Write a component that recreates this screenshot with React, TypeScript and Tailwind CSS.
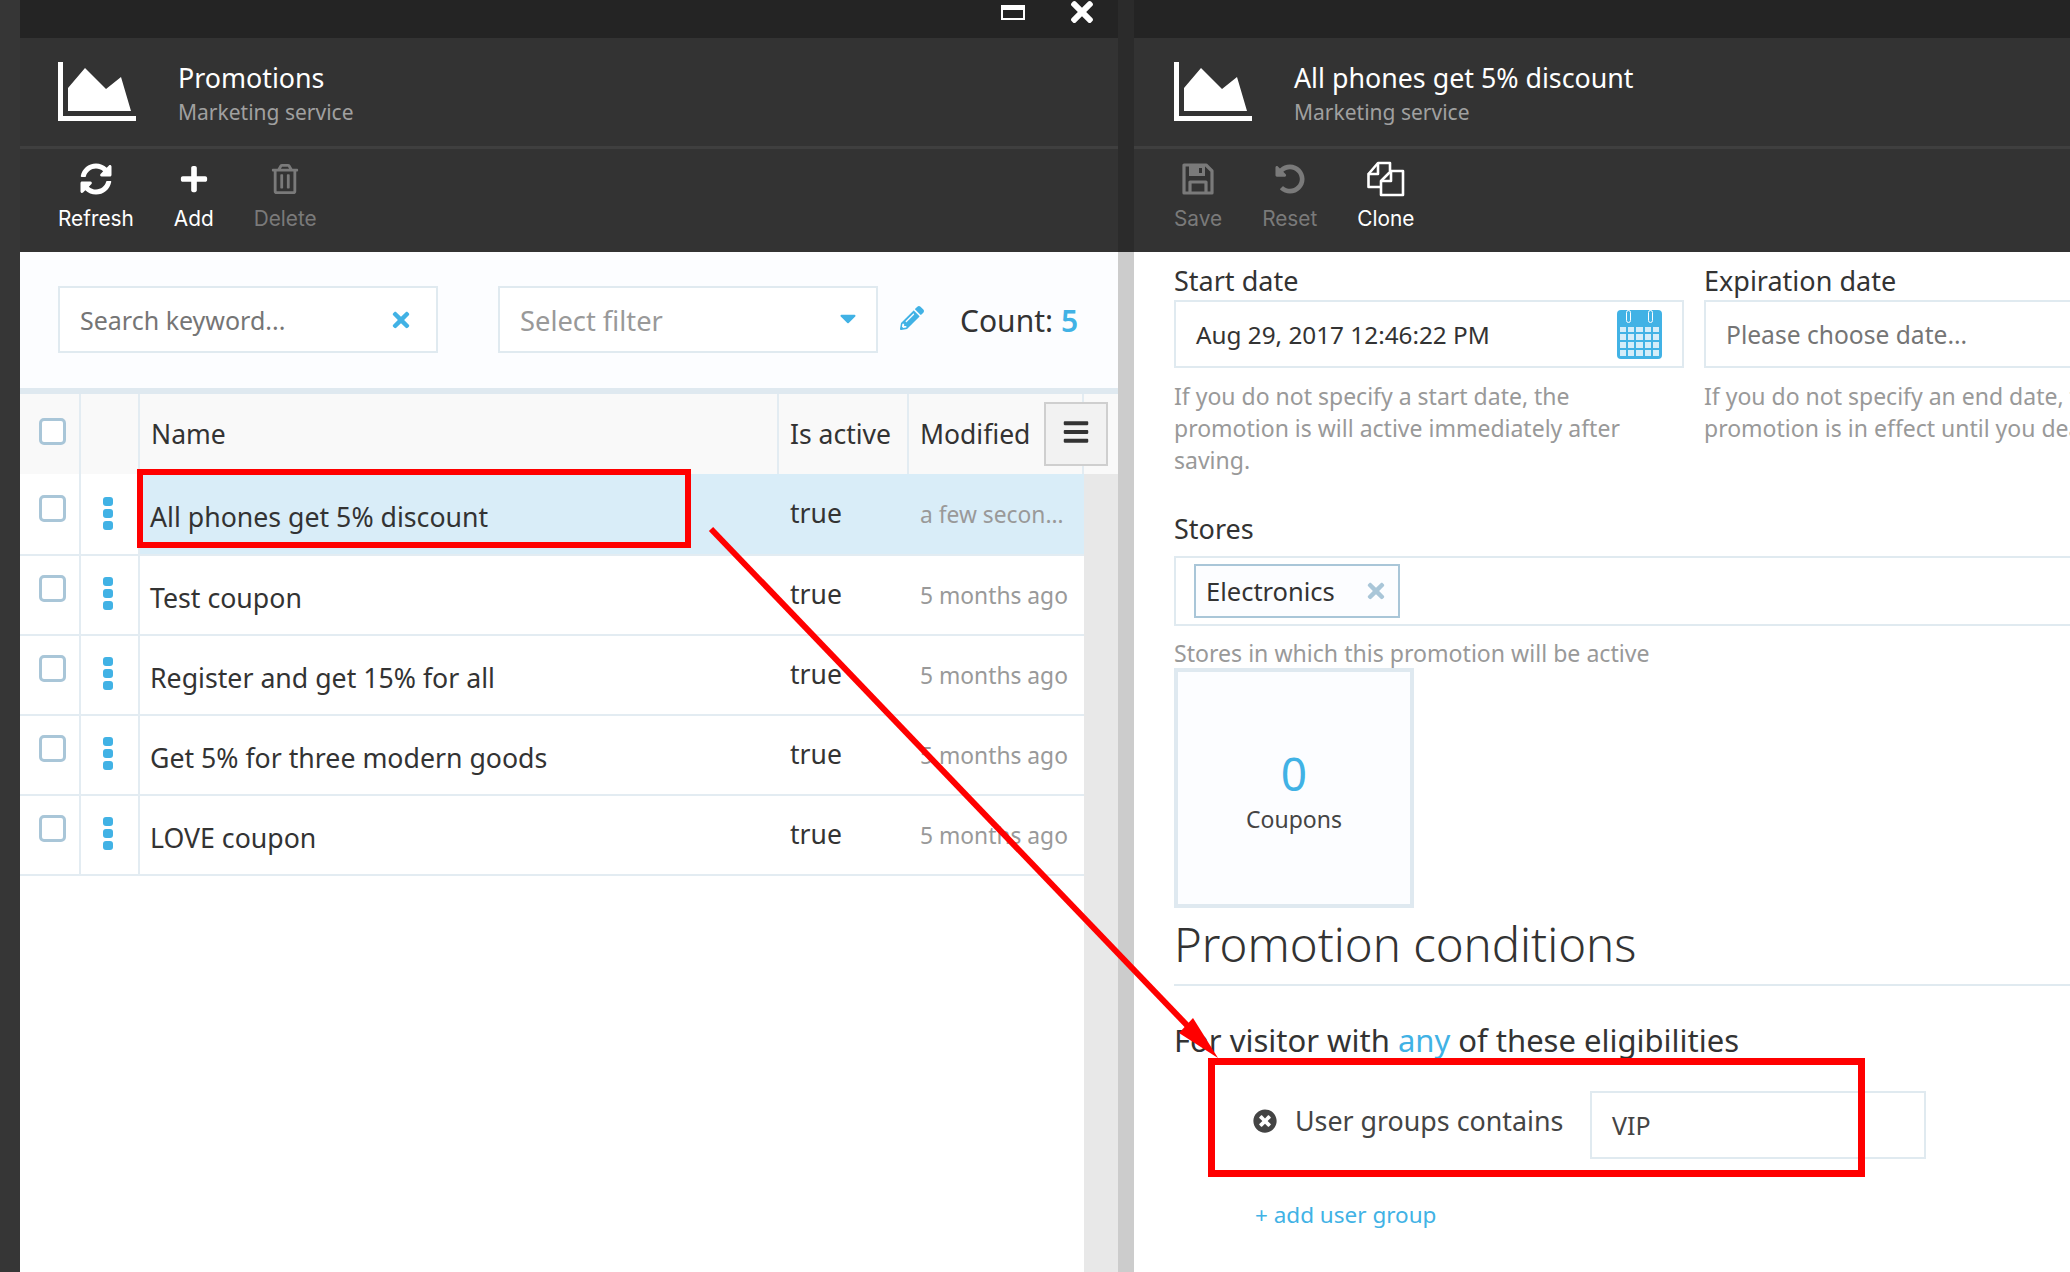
import { ReactNode } from "react";
import { FaBars, FaCaretDown, FaPencilAlt, FaPlus, FaRegTrashAlt, FaSyncAlt, FaTimes, FaTimesCircle, FaUndoAlt } from "react-icons/fa";

const rows = [
  { name: "All phones get 5% discount", modified: "a few seconds ago", selected: true },
  { name: "Test coupon", modified: "5 months ago" },
  { name: "Register and get 15% for all", modified: "5 months ago" },
  { name: "Get 5% for three modern goods", modified: "5 months ago" },
  { name: "LOVE coupon", modified: "5 months ago" },
];

function ChartLogo() {
  return (
    <svg width="78" height="59" viewBox="0 0 78 59" className="shrink-0 fill-white">
      <path d="M0 0h5v54h73v5H0z" />
      <polygon points="10,49 10,26 27,6 48,27 63,15 73,49" />
    </svg>
  );
}

function CloneIcon() {
  return (
    <svg width="38" height="36" viewBox="0 0 38 36" fill="none" stroke="white" strokeWidth="2.6" strokeLinejoin="round">
      <path d="M1.5 13 L11 2 H23 V10" />
      <path d="M11 2 V13 H1.5 V26 H14" />
      <path d="M14 20 L24 10 H36 V34 H14 Z" />
      <path d="M24 10 V20 H14" />
    </svg>
  );
}

function SaveIcon() {
  return (
    <svg width="32" height="32" viewBox="0 0 32 32" fill="none" stroke="currentColor" strokeWidth="3.2" strokeLinejoin="round">
      <path d="M2 2 H24 L30 8 V30 H2 Z" />
      <path d="M7 2 H23 V13 H7 Z M17 5 V10 H20 V5 Z" fill="currentColor" fillRule="evenodd" stroke="none" />
      <path d="M8 30 V19 H24 V30" />
    </svg>
  );
}

function CalendarIcon() {
  const cells = Array.from({ length: 20 });
  return (
    <div className="relative flex h-[49px] w-[45px] shrink-0 flex-col rounded-[4px] bg-[#41b2e5] px-[3px] pb-[3px] pt-[17px]">
      <span className="absolute left-[9px] top-0 h-[13px] w-[5px] rounded-full border border-[#fcfdff] bg-[#41b2e5]" />
      <span className="absolute right-[9px] top-0 h-[13px] w-[5px] rounded-full border border-[#fcfdff] bg-[#41b2e5]" />
      <div className="grid flex-1 grid-cols-5 grid-rows-4 gap-[2px]">
        {cells.map((_, i) => (
          <span key={i} className="bg-[#d4edf9]" />
        ))}
      </div>
    </div>
  );
}

function BladeHead({ title }: { title: string }) {
  return (
    <div className="flex h-[108px] items-start bg-[#333333] pt-[24px]">
      <ChartLogo />
      <div className="ml-[42px] -mt-[1px]">
        <div className="h-[34px] whitespace-nowrap text-[26.8px] leading-[34px] text-white">{title}</div>
        <div className="h-[34px] text-[21px] leading-[34px] text-[#a0a0a0]">Marketing service</div>
      </div>
    </div>
  );
}

function ToolButton({ icon, label, off }: { icon: ReactNode; label: string; off?: boolean }) {
  return (
    <div className={`flex flex-col items-center ${off ? "text-[#7a7a7a]" : "text-white"}`}>
      <div className="flex h-[34px] items-center">{icon}</div>
      <div className="mt-[10px] font-['Inter'] text-[20.8px] leading-[26px]">{label}</div>
    </div>
  );
}

function Toolbar({ children }: { children: ReactNode }) {
  return (
    <div className="flex h-[103px] items-start gap-[40px] bg-[#333333] pt-[13px]">{children}</div>
  );
}

function Divider() {
  return <div className="h-[3px] bg-[#3f3f3f]" />;
}

function Checkbox() {
  return <span className="block h-[27px] w-[27px] rounded-[5px] border-[3px] border-[#a9c6d8] bg-white" />;
}

function Dots() {
  return (
    <div className="flex flex-col gap-[3px]">
      <span className="h-[9px] w-[10px] rounded-[3px] bg-[#41b2e5]" />
      <span className="h-[9px] w-[10px] rounded-[3px] bg-[#41b2e5]" />
      <span className="h-[9px] w-[10px] rounded-[3px] bg-[#41b2e5]" />
    </div>
  );
}

function TableHeader() {
  return (
    <div className="relative grid h-[80px] grid-cols-[61px_59px_639px_130px_175px_32px] bg-[#f9f9f9] text-[26.5px] text-[#333333]">
      <div className="flex items-center justify-center border-r-2 border-[#e3ecf2] pb-[6px] pl-[6px]">
        <Checkbox />
      </div>
      <div className="border-r-2 border-[#e3ecf2]" />
      <div className="flex items-center border-r-2 border-[#e3ecf2] pl-[11px] pt-[2px]">Name</div>
      <div className="flex items-center whitespace-nowrap border-r-2 border-[#e3ecf2] pl-[11px] pt-[2px]">Is active</div>
      <div className="flex items-center border-r-2 border-[#e3ecf2] pl-[11px] pt-[2px]">Modified</div>
      <div />
      {/* column menu sits over the header */}
      <div className="absolute left-[1024px] top-[8px] flex h-[64px] w-[64px] items-center justify-center border-2 border-[#cfcfcf] bg-[#f2f2f2] pb-[4px]">
        <FaBars size={28} />
      </div>
    </div>
  );
}

function TableRow({ name, modified, selected }: { name: string; modified: string; selected?: boolean }) {
  return (
    <div className={`grid grid-cols-[61px_59px_639px_130px_175px] border-b-2 border-[#e3ecf2] bg-white ${selected ? "h-[82px]" : "h-[80px]"}`}>
      <div className={`flex items-center justify-center border-r-2 border-[#e3ecf2] pb-[14px] pl-[6px] ${selected ? "pt-[2px]" : ""}`}>
        <Checkbox />
      </div>
      <div className={`flex items-center justify-center border-r-2 border-[#e3ecf2] pb-[4px] pr-[4px] ${selected ? "pt-[2px]" : ""}`}>
        <Dots />
      </div>
      <div className={`flex items-center pl-[10px] pt-[6px] text-[26.7px] text-[#333333] ${selected ? "bg-[#d9edf8]" : ""}`}>{name}</div>
      <div className={`flex items-center pl-[11px] pb-[1px] text-[26.5px] text-[#333333] ${selected ? "bg-[#d9edf8]" : ""}`}>true</div>
      <div className={`flex min-w-0 items-center pl-[11px] pr-[10px] pt-[2px] text-[22.8px] text-[#999999] ${selected ? "bg-[#d9edf8]" : ""}`}>
        <span className="truncate">{modified}</span>
      </div>
    </div>
  );
}

function LeftBlade() {
  return (
    <div className="flex w-[1098px] shrink-0 flex-col">
      <div className="flex h-[38px] items-start justify-end gap-[41px] bg-[#242424] pr-[20px]">
        <span className="mt-[5px] block h-[15px] w-[24px] border-2 border-t-[5px] border-white" />
        <FaTimes size={32} className="-mt-[4px] text-white" />
      </div>
      <div className="bg-[#333333] pl-[38px]">
        <BladeHead title="Promotions" />
      </div>
      <Divider />
      <div className="bg-[#333333] pl-[38px]">
        <Toolbar>
          <ToolButton icon={<FaSyncAlt size={32} />} label="Refresh" />
          <ToolButton icon={<FaPlus size={30} />} label="Add" />
          <ToolButton icon={<FaRegTrashAlt size={30} />} label="Delete" off />
        </Toolbar>
      </div>
      <div className="flex h-[136px] items-start bg-[#fcfdff] pl-[38px] pt-[34px]">
        <div className="flex h-[67px] w-[380px] items-center justify-between border-2 border-[#e0eaf0] bg-white pl-[20px] pr-[23px] text-[25px] text-[#757575]">
          <span className="pt-[2px]">Search keyword...</span>
          <FaTimes size={24} className="text-[#41b2e5]" />
        </div>
        <div className="ml-[60px] flex h-[67px] w-[380px] items-center justify-between border-2 border-[#e0eaf0] bg-white pl-[20px] pr-[15px] text-[27.3px] text-[#999999]">
          <span className="pt-[3px]">Select filter</span>
          <FaCaretDown size={26} className="mb-[4px] text-[#41b2e5]" />
        </div>
        <FaPencilAlt size={24} className="ml-[22px] mt-[20px] text-[#41b2e5]" />
        <div className="ml-[36px] mt-[15px] whitespace-nowrap text-[30px] leading-[40px] text-[#333333]">
          Count: <span className="font-semibold text-[#41b2e5]">5</span>
        </div>
      </div>
      <div className="h-[6px] bg-[#dfe9f0]" />
      <TableHeader />
      <div className="flex flex-1">
        <div className="w-[1064px] bg-white">
          {rows.map((r) => (
            <TableRow key={r.name} name={r.name} modified={r.modified} selected={r.selected} />
          ))}
        </div>
        <div className="flex-1 bg-[#e8e8e8]" />
      </div>
    </div>
  );
}

function DateField({ label, value, help, placeholder, icon }: { label: string; value: string; help: string; placeholder?: boolean; icon?: boolean }) {
  return (
    <div className="w-[510px] shrink-0">
      <div className="mb-[4px] h-[30px] text-[27px] leading-[30px] text-[#333333]">{label}</div>
      <div className="flex h-[68px] items-center justify-between border-2 border-[#e0eaf0] bg-white pl-[20px] pr-[20px]">
        <span className={`pt-[2px] ${placeholder ? "text-[24.6px] text-[#757575]" : "text-[24.3px] text-[#333333]"}`}>{value}</span>
        {icon && <CalendarIcon />}
      </div>
      <p className="mt-[12px] h-[96px] whitespace-pre text-[23px] leading-[32px] text-[#999999]">{help}</p>
    </div>
  );
}

function RightBlade() {
  return (
    <div className="flex min-w-0 flex-1 flex-col overflow-hidden">
      <div className="h-[38px] bg-[#242424]" />
      <div className="bg-[#333333] pl-[40px]">
        <BladeHead title="All phones get 5% discount" />
      </div>
      <Divider />
      <div className="bg-[#333333] pl-[40px]">
        <Toolbar>
          <ToolButton icon={<SaveIcon />} label="Save" off />
          <ToolButton icon={<FaUndoAlt size={30} />} label="Reset" off />
          <ToolButton icon={<CloneIcon />} label="Clone" />
        </Toolbar>
      </div>
      <div className="w-[1200px] flex-1 bg-white pl-[40px] pt-[14px]">
        <div className="flex gap-[20px]">
          <DateField
            label="Start date"
            value="Aug 29, 2017 12:46:22 PM"
            help={"If you do not specify a start date, the\npromotion is will active immediately after\nsaving."}
            icon
          />
          <DateField
            label="Expiration date"
            value="Please choose date..."
            help={"If you do not specify an end date, the\npromotion is in effect until you deactivate it."}
            placeholder
          />
        </div>
        <div className="mt-[37px] h-[32px] text-[27px] leading-[32px] text-[#333333]">Stores</div>
        <div className="mt-[11px] flex h-[70px] items-start border-2 border-[#e0eaf0] pl-[18px] pt-[6px]">
          <div className="flex h-[54px] w-[206px] items-center justify-between border-2 border-[#a9c6d8] bg-[#fcfdff] pl-[10px] pr-[10px] text-[25.5px] text-[#333333]">
            Electronics
            <FaTimes size={24} className="text-[#a9c6d8]" />
          </div>
        </div>
        <div className="mt-[12px] h-[30px] text-[23.1px] leading-[30px] text-[#999999]">Stores in which this promotion will be active</div>
        <div className="flex h-[240px] w-[240px] flex-col items-center justify-center border-4 border-[#dfe9f0] bg-[#fcfdff] pt-[6px]">
          <div className="text-[46px] leading-[50px] text-[#41b2e5]">0</div>
          <div className="mt-[6px] text-[23px] leading-[30px] text-[#444444]">Coupons</div>
        </div>
        <div className="flex h-[78px] items-center border-b-2 border-[#e0eaf0] pb-[4px] text-[47.3px] font-light text-[#333333]">
          Promotion conditions
        </div>
        <div className="mt-[34px] h-[40px] text-[31px] leading-[40px] text-[#333333]">
          For visitor with <span className="text-[#41b2e5]">any</span> of these eligibilities
        </div>
        <div className="mt-[31px] flex items-start pl-[79px]">
          <div className="flex h-[60px] w-[311px] items-center whitespace-nowrap">
            <FaTimesCircle size={24} className="shrink-0 text-[#444444]" />
            <span className="ml-[18px] text-[26.8px] text-[#444444]">User groups contains</span>
          </div>
          <div className="ml-[26px] flex h-[68px] w-[336px] items-center border-2 border-[#e0eaf0] bg-white pl-[20px] pt-[2px] text-[25px] text-[#444444]">VIP</div>
        </div>
        <div className="mt-[40px] h-[32px] pl-[81px] text-[22.5px] leading-[32px] text-[#41b2e5]">+ add user group</div>
      </div>
    </div>
  );
}

function Annotations() {
  return (
    <>
      <div className="absolute left-[137px] top-[469px] h-[79px] w-[554px] border-[6px] border-[#ff0000]" />
      <div className="absolute left-[1208px] top-[1058px] h-[119px] w-[657px] border-[7px] border-[#ff0000]" />
      <svg className="absolute left-0 top-0" width="2070" height="1272">
        <line x1="711" y1="529" x2="1204" y2="1043" stroke="#ff0000" strokeWidth="6" />
        <polygon points="1218,1058 1193,1018 1179,1033" fill="#ff0000" />
      </svg>
    </>
  );
}

export default function App() {
  return (
    <div className="relative flex h-[1272px] w-[2070px] overflow-hidden bg-white font-['Noto_Sans',sans-serif]">
      <div className="w-[20px] shrink-0 bg-[#363636]" />
      <LeftBlade />
      <div className="flex w-[16px] shrink-0 flex-col">
        <div className="h-[252px] bg-[#2b2b2b]" />
        <div className="flex-1 bg-[#cccccc]" />
      </div>
      <RightBlade />
      <Annotations />
    </div>
  );
}
